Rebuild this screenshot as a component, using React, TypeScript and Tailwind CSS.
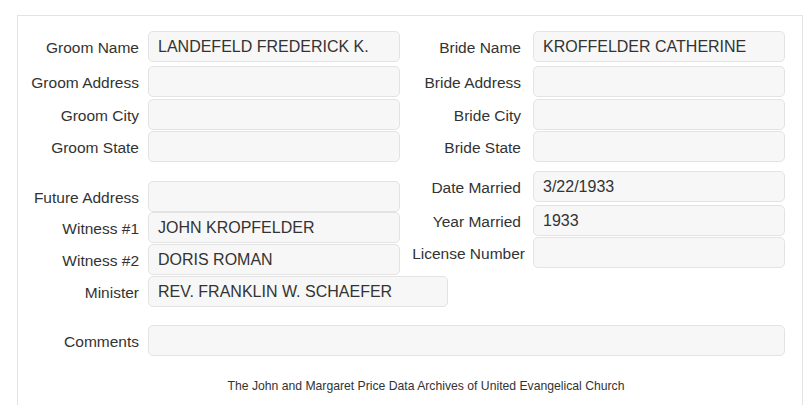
const Field = ({ label, value = "", mt, labelW, inputW }: { label: string; value?: string; mt: string; labelW: string; inputW: string }) => (
    <div className={`flex items-stretch h-[31px] ${mt}`}>
        <div className={`${labelW} shrink-0 flex items-center justify-end pt-[3px] whitespace-nowrap`}>{label}</div>
        <div className={`${inputW} shrink-0 flex items-center px-[9px] text-[16px] bg-[#f7f7f7] border border-[#e3e3e3] rounded-[5px] whitespace-nowrap overflow-hidden`}>{value}</div>
    </div>
)

const App = () => {
    return (
        <div className="bg-white w-[805px] h-[405px] overflow-hidden pt-[15px] pl-[17px] pr-[2px] text-[#333] text-[15.5px]" style={{ fontFamily: '"Liberation Sans", Arial, sans-serif' }}>
            <div className="border-t border-l border-r border-[#e3e3e3] h-[400px] pt-[15px]">
                <div className="flex">
                    {/* groom side */}
                    <div className="w-[384px] flex flex-col">
                        <Field label="Groom Name" value="LANDEFELD FREDERICK K." mt="" labelW="w-[130px] pr-[9px]" inputW="w-[252px]" />
                        <Field label="Groom Address" mt="mt-[4px]" labelW="w-[130px] pr-[9px]" inputW="w-[252px]" />
                        <Field label="Groom City" mt="mt-[2px]" labelW="w-[130px] pr-[9px]" inputW="w-[252px]" />
                        <Field label="Groom State" mt="mt-[1px]" labelW="w-[130px] pr-[9px]" inputW="w-[252px]" />
                        <Field label="Future Address" mt="mt-[19px]" labelW="w-[130px] pr-[9px]" inputW="w-[252px]" />
                        <Field label="Witness #1" value="JOHN KROPFELDER" mt="mt-[0px]" labelW="w-[130px] pr-[9px]" inputW="w-[252px]" />
                        <Field label="Witness #2" value="DORIS ROMAN" mt="mt-[1px]" labelW="w-[130px] pr-[9px]" inputW="w-[252px]" />
                        <Field label="Minister" value="REV. FRANKLIN W. SCHAEFER" mt="mt-[1px]" labelW="w-[130px] pr-[9px]" inputW="w-[300px]" />
                    </div>

                    {/* bride side */}
                    <div className="flex flex-col">
                        <Field label="Bride Name" value="KROFFELDER CATHERINE" mt="" labelW="w-[131px] pr-[12px]" inputW="w-[252px]" />
                        <Field label="Bride Address" mt="mt-[4px]" labelW="w-[131px] pr-[12px]" inputW="w-[252px]" />
                        <Field label="Bride City" mt="mt-[2px]" labelW="w-[131px] pr-[12px]" inputW="w-[252px]" />
                        <Field label="Bride State" mt="mt-[1px]" labelW="w-[131px] pr-[12px]" inputW="w-[252px]" />
                        <Field label="Date Married" value="3/22/1933" mt="mt-[9px]" labelW="w-[131px] pr-[12px]" inputW="w-[252px]" />
                        <Field label="Year Married" value="1933" mt="mt-[3px]" labelW="w-[131px] pr-[12px]" inputW="w-[252px]" />
                        <Field label="License Number" mt="mt-[1px]" labelW="w-[131px] pr-[8px]" inputW="w-[252px]" />
                    </div>
                </div>

                <Field label="Comments" mt="mt-[18px]" labelW="w-[130px] pr-[9px]" inputW="w-[637px]" />

                <div className="mt-[21px] text-center text-[12.2px] pl-[32px]">The John and Margaret Price Data Archives of United Evangelical Church</div>
            </div>
        </div>
    )
}

export default App
